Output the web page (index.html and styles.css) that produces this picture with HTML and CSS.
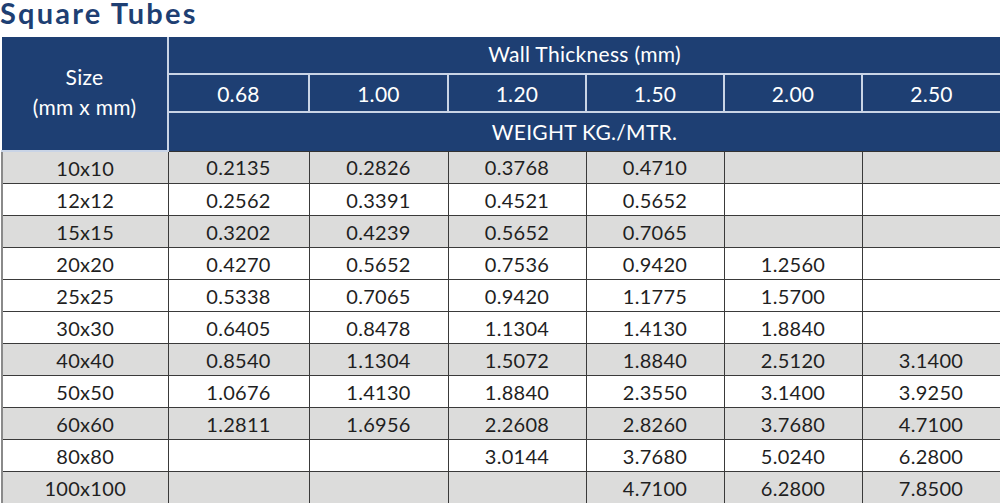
FILE: index.html
```html
<!DOCTYPE html>
<html>
<head>
<meta charset="utf-8">
<link rel="stylesheet" href="styles.css">
</head>
<body>
<h1 class="title">Square Tubes</h1>
<table class="tubes">
  <colgroup>
    <col class="c-size"><col class="c-a"><col class="c-b"><col class="c-c"><col class="c-c"><col class="c-c"><col class="c-d">
  </colgroup>
  <thead>
    <tr class="h1">
      <th rowspan="3" class="size">Size<br>(mm x mm)</th>
      <th colspan="6" class="span top">Wall Thickness (mm)</th>
    </tr>
    <tr class="h2">
      <th>0.68</th><th>1.00</th><th>1.20</th><th>1.50</th><th>2.00</th><th class="last">2.50</th>
    </tr>
    <tr class="h3">
      <th colspan="6" class="span">WEIGHT KG./MTR.</th>
    </tr>
  </thead>
  <tbody>
    <tr class="g"><td>10x10</td><td>0.2135</td><td>0.2826</td><td>0.3768</td><td>0.4710</td><td></td><td></td></tr>
    <tr><td>12x12</td><td>0.2562</td><td>0.3391</td><td>0.4521</td><td>0.5652</td><td></td><td></td></tr>
    <tr class="g"><td>15x15</td><td>0.3202</td><td>0.4239</td><td>0.5652</td><td>0.7065</td><td></td><td></td></tr>
    <tr><td>20x20</td><td>0.4270</td><td>0.5652</td><td>0.7536</td><td>0.9420</td><td>1.2560</td><td></td></tr>
    <tr><td>25x25</td><td>0.5338</td><td>0.7065</td><td>0.9420</td><td>1.1775</td><td>1.5700</td><td></td></tr>
    <tr><td>30x30</td><td>0.6405</td><td>0.8478</td><td>1.1304</td><td>1.4130</td><td>1.8840</td><td></td></tr>
    <tr class="g"><td>40x40</td><td>0.8540</td><td>1.1304</td><td>1.5072</td><td>1.8840</td><td>2.5120</td><td>3.1400</td></tr>
    <tr><td>50x50</td><td>1.0676</td><td>1.4130</td><td>1.8840</td><td>2.3550</td><td>3.1400</td><td>3.9250</td></tr>
    <tr class="g"><td>60x60</td><td>1.2811</td><td>1.6956</td><td>2.2608</td><td>2.8260</td><td>3.7680</td><td>4.7100</td></tr>
    <tr><td>80x80</td><td></td><td></td><td>3.0144</td><td>3.7680</td><td>5.0240</td><td>6.2800</td></tr>
    <tr class="g"><td>100x100</td><td></td><td></td><td></td><td>4.7100</td><td>6.2800</td><td>7.8500</td></tr>
  </tbody>
</table>
</body>
</html>
```

FILE: styles.css
```css
html, body {
  margin: 0;
  padding: 0;
  background: #ffffff;
}
body {
  font-family: Lato, "Open Sans", sans-serif;
}
.title {
  margin: 0;
  height: 37px;
  padding-top: 1px;
  box-sizing: border-box;
  font-size: 29px;
  line-height: 24px;
  font-weight: 700;
  color: #1e3f73;
  letter-spacing: 2.2px;
}
.tubes {
  border-collapse: collapse;
  table-layout: fixed;
  width: 998px;
  margin-left: 1px;
  font-size: 20px;
}
.c-size { width: 166px; }
.c-a { width: 141px; }
.c-b { width: 139px; }
.c-c { width: 138px; }
.c-d { width: 138px; }

.tubes th {
  background: #1e3f73;
  color: #ffffff;
  font-weight: 400;
  font-size: 21px;
  letter-spacing: 0.3px;
  padding: 0;
  text-align: center;
  vertical-align: middle;
  border: 2px solid #c9d4e6;
}
.tubes thead tr:first-child th { border-top: none; }
.tubes th.last, .tubes th.span { border-right: none; }
.tubes th.top { padding-bottom: 3px; }
.tubes th.size {
  border-left: none;
  line-height: 30px;
  padding-bottom: 4px;
}
.h1 { height: 37px; }
.h2 { height: 38px; }
.h3 { height: 39px; }
.tubes thead tr.h3 th { border-bottom: 1px solid #333; }

.tubes td {
  height: 31px;
  padding: 0;
  line-height: 28px;
  text-align: center;
  vertical-align: middle;
  color: #1f1f1f;
  border: 1px solid #3a3a3a;
  background: #ffffff;
  letter-spacing: 0.3px;
}
.tubes tr.g td { background: #dcdcdb; }
.tubes td:first-child { border-left: 2px solid #8a8a8a; }
.tubes td:last-child { border-right: 1px solid #6a6a6a; }
.tubes tbody tr:last-child td { border-bottom: none; }
```
